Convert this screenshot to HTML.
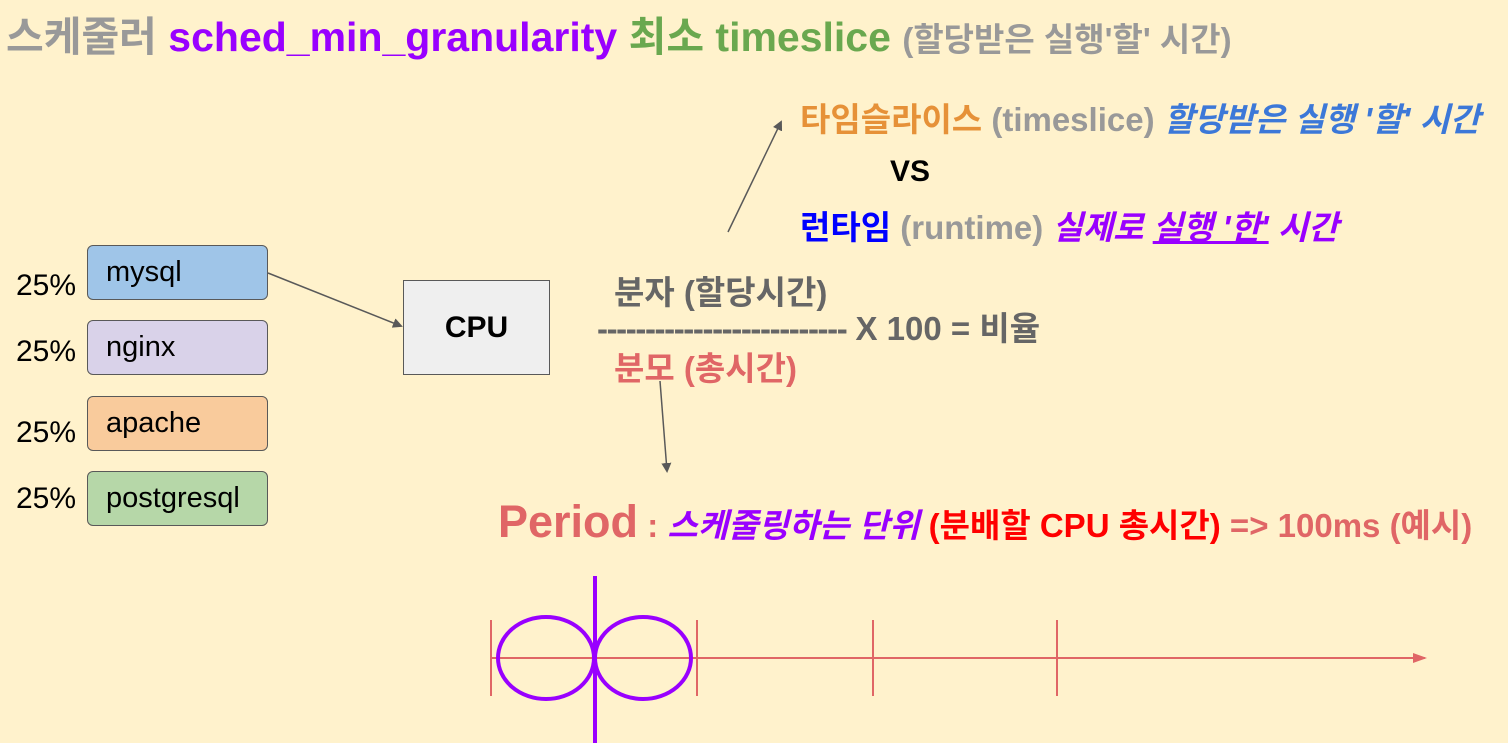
<!DOCTYPE html>
<html><head><meta charset="utf-8"><style>
body{margin:0;width:1508px;height:743px;background:#fff2cc;position:relative;overflow:hidden;font-family:"Liberation Sans","Noto Sans CJK KR",sans-serif;}
.t{position:absolute;white-space:nowrap;font-weight:bold;line-height:1;}
.box{position:absolute;border:1.5px solid #595959;border-radius:6px;box-sizing:border-box;font-size:29px;padding-left:18px;display:flex;align-items:center;}
.p{position:absolute;font-size:30px;line-height:1;}
</style></head><body>
<div class="t" style="left:6px;top:17px;font-size:41px;"><span style="color:#999">스케줄러</span> <span style="color:#9900ff">sched_min_granularity</span> <span style="color:#6aa84f">최소 timeslice</span> <span style="color:#999;font-size:33px">(할당받은 실행'할' 시간)</span></div>

<div class="t" style="left:800px;top:103px;font-size:33px;"><span style="color:#e69138">타임슬라이스</span> <span style="color:#999">(timeslice)</span> <i style="color:#3c78d8">할당받은 실행 '할' 시간</i></div>
<div class="t" style="left:890px;top:157px;font-size:30px;color:#000">VS</div>
<div class="t" style="left:800px;top:211px;font-size:33px;"><span style="color:#0000ff">런타임</span> <span style="color:#999">(runtime)</span> <i style="color:#9900ff">실제로 <u>실행 '한'</u> 시간</i></div>

<div class="t" style="left:614px;top:276px;font-size:33px;color:#666">분자 (할당시간)</div>
<div class="t" style="left:597px;top:312px;font-size:33px;color:#666"><span style="letter-spacing:-1.4px">--------------------------</span> X 100 = 비율</div>
<div class="t" style="left:614px;top:352px;font-size:33px;color:#e06666">분모 (총시간)</div>

<div class="t" style="left:498px;top:499px;font-size:33px;color:#e06666"><span style="font-size:45px">Period</span> : <i style="color:#9900ff">스케줄링하는 단위</i> <span style="color:#ff0000">(분배할 CPU 총시간)</span> => 100ms (예시)</div>

<div class="p" style="left:16px;top:271px">25%</div>
<div class="p" style="left:16px;top:337px">25%</div>
<div class="p" style="left:16px;top:418px">25%</div>
<div class="p" style="left:16px;top:484px">25%</div>
<div class="box" style="left:87px;top:245px;width:181px;height:55px;background:#9fc5e8">mysql</div>
<div class="box" style="left:87px;top:320px;width:181px;height:55px;background:#d9d2e9">nginx</div>
<div class="box" style="left:87px;top:396px;width:181px;height:55px;background:#f9cb9c">apache</div>
<div class="box" style="left:87px;top:471px;width:181px;height:55px;background:#b6d7a8">postgresql</div>
<div class="box" style="left:403px;top:280px;width:147px;height:95px;background:#efefef;border-radius:0;justify-content:center;padding:0;font-weight:bold;font-size:30px">CPU</div>

<svg style="position:absolute;left:0;top:0" width="1508" height="743">
<defs><marker id="a" markerWidth="10" markerHeight="10" refX="8" refY="5" orient="auto" markerUnits="userSpaceOnUse"><path d="M0,0 L10,5 L0,10 z" fill="#595959"/></marker>
<marker id="r" markerWidth="14" markerHeight="10" refX="12" refY="5" orient="auto" markerUnits="userSpaceOnUse"><path d="M0,0 L14,5 L0,10 z" fill="#e06666"/></marker></defs>
<g stroke="#595959" stroke-width="1.5" fill="none">
<line x1="268" y1="273" x2="401" y2="326" marker-end="url(#a)"/>
<line x1="728" y1="232" x2="781" y2="122" marker-end="url(#a)"/>
<line x1="660" y1="381" x2="667" y2="471" marker-end="url(#a)"/>
</g>
<g stroke="#e06666" stroke-width="2">
<line x1="491" y1="658" x2="1425" y2="658" marker-end="url(#r)"/>
<line x1="491" y1="620" x2="491" y2="696"/>
<line x1="697" y1="620" x2="697" y2="696"/>
<line x1="873" y1="620" x2="873" y2="696"/>
<line x1="1057" y1="620" x2="1057" y2="696"/>
</g>
<g stroke="#9900ff" stroke-width="4" fill="none">
<line x1="595" y1="576" x2="595" y2="743"/>
<ellipse cx="546" cy="658" rx="48" ry="41"/>
<ellipse cx="643" cy="658" rx="48" ry="41"/>
</g>
</svg>
</body></html>
